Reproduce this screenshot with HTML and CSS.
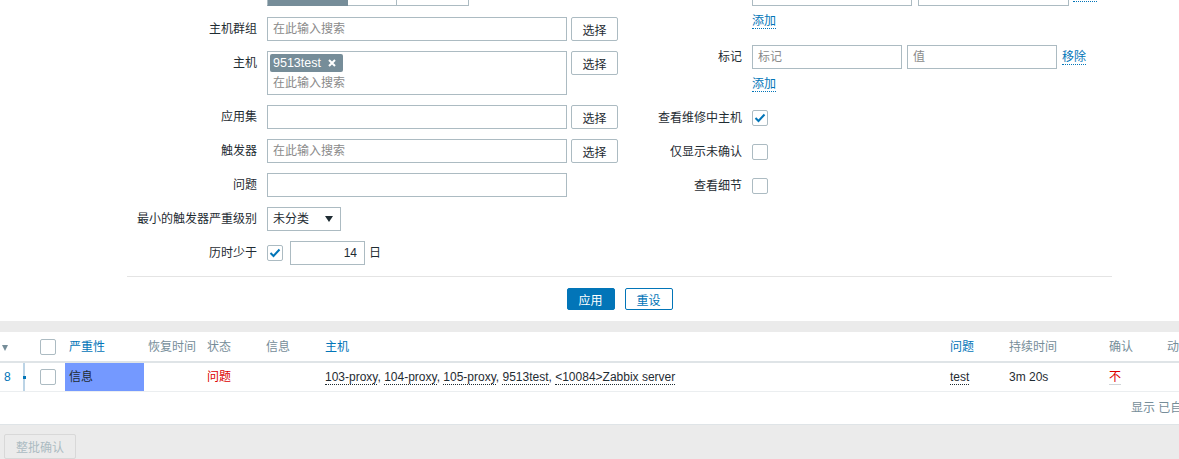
FILE: index.html
```html
<!DOCTYPE html>
<html lang="zh-CN">
<head>
  <meta charset="UTF-8" />
  <title>问题</title>
  <link rel="stylesheet" href="styles.css">
</head>
<body>
  <div class="filter">
    <div class="filter-cols">
      <div class="col col-left">
        <div class="row">
          <div class="label"></div>
          <div class="field">
            <ul class="seg">
              <li class="seg-on">最近的问题</li>
              <li>问题</li>
              <li>历史</li>
            </ul>
          </div>
        </div>
        <div class="row row-first">
          <label class="label">主机群组</label>
          <div class="field">
            <input type="text" class="text w300" placeholder="在此输入搜索">
            <button class="btn-grey">选择</button>
          </div>
        </div>
        <div class="row">
          <label class="label">主机</label>
          <div class="field field-top">
            <div class="multi w300">
              <span class="tag">9513test
                <svg width="8" height="8" viewBox="0 0 8 8"><path d="M1 1 L7 7 M7 1 L1 7" stroke="#fff" stroke-width="2"/></svg>
              </span>
              <span class="multi-ph">在此输入搜索</span>
            </div>
            <button class="btn-grey">选择</button>
          </div>
        </div>
        <div class="row">
          <label class="label">应用集</label>
          <div class="field">
            <input type="text" class="text w300">
            <button class="btn-grey">选择</button>
          </div>
        </div>
        <div class="row">
          <label class="label">触发器</label>
          <div class="field">
            <input type="text" class="text w300" placeholder="在此输入搜索">
            <button class="btn-grey">选择</button>
          </div>
        </div>
        <div class="row">
          <label class="label">问题</label>
          <div class="field">
            <input type="text" class="text w300">
          </div>
        </div>
        <div class="row">
          <label class="label">最小的触发器严重级别</label>
          <div class="field">
            <div class="select">
              <span>未分类</span>
              <svg width="8" height="6" viewBox="0 0 8 6"><path d="M0 0 H8 L4 6 Z" fill="#1f2c33"/></svg>
            </div>
          </div>
        </div>
        <div class="row">
          <label class="label">历时少于</label>
          <div class="field">
            <span class="cb cb-on"><svg width="12" height="10" viewBox="0 0 12 10"><path d="M1.5 5 L4.5 8 L10.5 1.5" fill="none" stroke="#0275b8" stroke-width="2"/></svg></span>
            <input type="text" class="text days" value="14">
            <span class="unit">日</span>
          </div>
        </div>
      </div>

      <div class="col col-right">
        <div class="row">
          <div class="label"></div>
          <div class="field">
            <div class="text inv-type">类型</div>
            <input type="text" class="text inv-value">
            <a href="#" class="link">移除</a>
          </div>
        </div>
        <div class="row row-link">
          <div class="label"></div>
          <div class="field"><a href="#" class="link">添加</a></div>
        </div>
        <div class="row row-tags">
          <label class="label">标记</label>
          <div class="field">
            <input type="text" class="text w150" placeholder="标记">
            <input type="text" class="text w150" placeholder="值">
            <a href="#" class="link">移除</a>
          </div>
        </div>
        <div class="row row-link">
          <div class="label"></div>
          <div class="field"><a href="#" class="link">添加</a></div>
        </div>
        <div class="row">
          <label class="label">查看维修中主机</label>
          <div class="field">
            <span class="cb cb-on"><svg width="12" height="10" viewBox="0 0 12 10"><path d="M1.5 5 L4.5 8 L10.5 1.5" fill="none" stroke="#0275b8" stroke-width="2"/></svg></span>
          </div>
        </div>
        <div class="row">
          <label class="label">仅显示未确认</label>
          <div class="field"><span class="cb"></span></div>
        </div>
        <div class="row">
          <label class="label">查看细节</label>
          <div class="field"><span class="cb"></span></div>
        </div>
      </div>
    </div>

    <div class="filter-buttons">
      <button class="btn-apply">应用</button>
      <button class="btn-reset">重设</button>
    </div>
  </div>

  <div class="list">
    <table class="list-table">
      <colgroup>
        <col style="width:16px"><col style="width:17px"><col style="width:32px"><col style="width:79px">
        <col style="width:59px"><col style="width:59px"><col style="width:59px"><col style="width:625px">
        <col style="width:59px"><col style="width:100px"><col style="width:58px"><col>
      </colgroup>
      <thead>
        <tr>
          <th class="c-arrow"><span class="arrow"></span></th>
          <th></th>
          <th class="c-cb"><span class="cb"></span></th>
          <th><a href="#" class="th-link">严重性</a></th>
          <th>恢复时间</th>
          <th>状态</th>
          <th>信息</th>
          <th><a href="#" class="th-link">主机</a></th>
          <th><a href="#" class="th-link">问题</a></th>
          <th>持续时间</th>
          <th>确认</th>
          <th>动作</th>
        </tr>
      </thead>
      <tbody>
        <tr>
          <td class="c-num"><a href="#" class="num">8</a></td>
          <td class="c-time"><span class="dot"></span></td>
          <td class="c-cb"><span class="cb"></span></td>
          <td class="sev-info">信息</td>
          <td></td>
          <td class="red">问题</td>
          <td></td>
          <td class="hosts">
            <a href="#" class="dotted">103-proxy</a>, <a href="#" class="dotted">104-proxy</a>, <a href="#" class="dotted">105-proxy</a>, <a href="#" class="dotted">9513test</a>, <a href="#" class="dotted">&lt;10084&gt;Zabbix server</a>
          </td>
          <td><a href="#" class="dotted">test</a></td>
          <td>3m 20s</td>
          <td><a href="#" class="ack-no">不</a></td>
          <td></td>
        </tr>
      </tbody>
    </table>
    <div class="paging">显示 已自动发现的 1 中的 1</div>
  </div>

  <div class="footer">
    <button class="btn-mass" disabled>整批确认</button>
  </div>
</body>
</html>
```

FILE: styles.css
```css
body {
  margin: 0;
  font-family: "Liberation Sans", Arial, "Noto Sans CJK SC", sans-serif;
  font-size: 12px;
  line-height: 14px;
  color: #1f2c33;
  background-color: #ffffff;
  overflow: hidden;
}
input, button {
  font-family: inherit;
  font-size: 12px;
}
a {
  text-decoration: none;
}

/* filter */
.filter {
  margin: -18px 0 0 127px;
  width: 985px;
}
.filter-cols {
  display: flex;
  padding-bottom: 11px;
  border-bottom: 1px solid #e4e4e4;
}
.col-left {
  width: 500px;
}
.col-right {
  flex: 1;
}
.row {
  display: flex;
  align-items: flex-start;
  margin-top: 10px;
}
.row:first-child {
  margin-top: 0;
}
.row-first {
  margin-top: 11px;
}
.label {
  width: 130px;
  flex-shrink: 0;
  text-align: right;
  line-height: 24px;
  margin-right: 10px;
  white-space: nowrap;
}
.col-right .label {
  width: 115px;
}
.field {
  display: flex;
  align-items: center;
  min-height: 24px;
}
.field-top {
  align-items: flex-start;
}
.row-link {
  margin-top: 3px;
}
.row-tags {
  margin-top: 12px;
}

.seg {
  display: flex;
  margin: 0;
  padding: 0;
  list-style: none;
}
.seg li {
  height: 24px;
  box-sizing: border-box;
  line-height: 22px;
  border: 1px solid #acbbc2;
  border-left: none;
  text-align: center;
  width: 49px;
  color: #1f2c33;
}
.seg li:first-child {
  width: 81px;
  border-left: 1px solid #acbbc2;
}
.seg li:last-child {
  width: 72px;
}
.seg .seg-on {
  background-color: #768d99;
  border-color: #768d99;
  color: #ffffff;
}

.text {
  height: 24px;
  box-sizing: border-box;
  border: 1px solid #acbbc2;
  padding: 0 5px;
  color: #1f2c33;
  background-color: #ffffff;
  outline: none;
}
.text::placeholder {
  color: #8a8a8a;
}
.w300 {
  width: 300px;
}
.w150 {
  width: 150px;
  margin-right: 5px;
}
.inv-type {
  width: 160px;
  line-height: 22px;
  margin-right: 6px;
}
.inv-value {
  width: 151px;
  margin-right: 4px;
}
.btn-grey {
  height: 24px;
  width: 47px;
  margin-left: 4px;
  padding: 0;
  border: 1px solid #acbbc2;
  border-radius: 2px;
  background-color: #ffffff;
  color: #1f2c33;
}
.link {
  color: #0275b8;
  border-bottom: 1px dotted #0275b8;
  line-height: 14px;
}

.multi {
  height: 44px;
  box-sizing: border-box;
  border: 1px solid #acbbc2;
  padding: 2px 2px 0 2px;
}
.tag {
  display: inline-flex;
  align-items: center;
  gap: 7px;
  height: 18px;
  padding: 0 7px 0 3px;
  border-radius: 2px;
  background-color: #768d99;
  color: #ffffff;
  font-size: 12.5px;
}
.multi-ph {
  display: block;
  padding: 4px 0 0 3px;
  color: #8a8a8a;
}

.select {
  display: flex;
  align-items: center;
  justify-content: space-between;
  width: 74px;
  height: 24px;
  box-sizing: border-box;
  border: 1px solid #acbbc2;
  padding: 0 7px 0 5px;
}

.cb {
  display: inline-flex;
  align-items: center;
  justify-content: center;
  width: 16px;
  height: 16px;
  box-sizing: border-box;
  border: 1px solid #acbbc2;
  border-radius: 2px;
  background-color: #ffffff;
  vertical-align: middle;
}
.days {
  width: 75px;
  margin-left: 7px;
  text-align: right;
  padding-right: 7px;
}
.unit {
  margin-left: 4px;
}

.filter-buttons {
  display: flex;
  justify-content: center;
  gap: 10px;
  padding: 11px 0 11px 0;
}
.filter-buttons button {
  width: 48px;
  height: 22px;
  padding: 0;
  border-radius: 2px;
  border: 1px solid #0275b8;
}
.btn-apply {
  background-color: #0275b8;
  color: #ffffff;
}
.btn-reset {
  background-color: #ffffff;
  color: #0275b8;
}

/* list */
.list {
  width: 1290px;
  border-top: 11px solid #ebebeb;
}
.list-table {
  width: 100%;
  table-layout: fixed;
  border-collapse: collapse;
}
.list-table th {
  height: 29px;
  padding: 0 0 0 4px;
  text-align: left;
  font-weight: normal;
  color: #768d99;
  border-bottom: 2px solid #dfe4e7;
  white-space: nowrap;
  overflow: hidden;
}
.list-table td {
  height: 28px;
  padding: 0 0 0 4px;
  border-bottom: 1px solid #ebeef0;
  white-space: nowrap;
  overflow: hidden;
}
.th-link {
  color: #0275b8;
}
.list-table .c-arrow {
  padding-left: 2px;
}
.arrow {
  display: inline-block;
  width: 0;
  height: 0;
  border-left: 3px solid transparent;
  border-right: 3px solid transparent;
  border-top: 6px solid #768d99;
}
.list-table .c-cb {
  padding-left: 7px;
}
.num {
  color: #0275b8;
}
.list-table .c-time {
  padding: 0;
  background: linear-gradient(#bcd4e6, #bcd4e6) no-repeat 7px 0 / 2px 100%;
}
.dot {
  display: block;
  width: 3px;
  height: 3px;
  margin-left: 7px;
  background-color: #0275b8;
}
.list-table .sev-info {
  background-color: #7499ff;
  color: #1f2c33;
}
.red {
  color: #dc0000;
}
.dotted {
  color: #1f2c33;
  border-bottom: 1px dotted #1f2c33;
}
.ack-no {
  color: #dc0000;
  border-bottom: 1px solid #d0d5d8;
}
.paging {
  height: 32px;
  line-height: 32px;
  padding-left: 1131px;
  color: #768d99;
  white-space: nowrap;
}

.footer {
  border-top: 1px solid #dfe4e7;
  background-color: #ebebeb;
  padding: 9px 0 10px 4px;
  height: 40px;
}
.btn-mass {
  width: 72px;
  height: 25px;
  padding: 0;
  border: 1px solid #d8d8d8;
  border-radius: 2px;
  background-color: #ebebeb;
  color: #acbbc2;
}
```
